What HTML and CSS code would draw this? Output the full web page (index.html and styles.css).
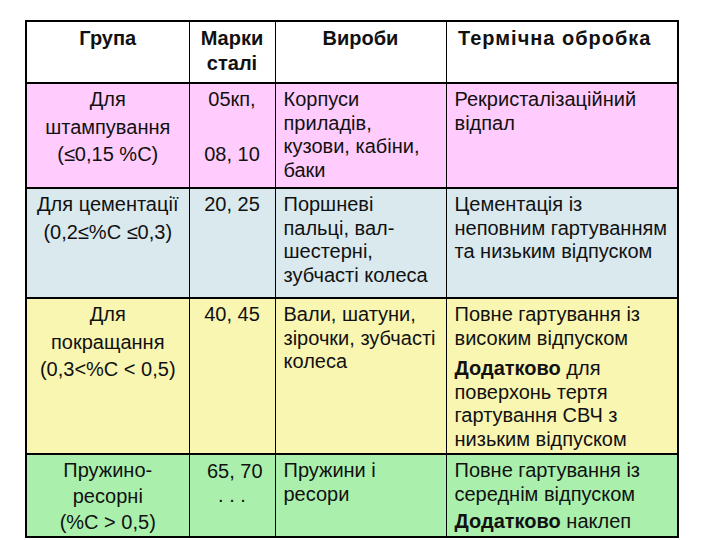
FILE: index.html
```html
<!DOCTYPE html>
<html lang="uk">
<head>
<meta charset="utf-8">
<title>Марки сталі</title>
<link rel="stylesheet" href="styles.css">
</head>
<body>
<div class="page">
  <table class="steel">
    <colgroup>
      <col class="c1"><col class="c2"><col class="c3"><col class="c4">
    </colgroup>
    <thead>
      <tr class="head">
        <th class="group">Група</th>
        <th class="grade">Марки<br>сталі</th>
        <th class="items">Вироби</th>
        <th class="treat">Термічна обробка</th>
      </tr>
    </thead>
    <tbody>
      <tr class="row pink">
        <td class="group">Для<br>штампування<br>(≤0,15 %С)</td>
        <td class="grade">05кп,<br>&nbsp;<br>08, 10</td>
        <td class="items">Корпуси<br>приладів,<br>кузови, кабіни,<br>баки</td>
        <td class="treat"><p>Рекристалізаційний<br>відпал</p></td>
      </tr>
      <tr class="row blue">
        <td class="group">Для цементації<br>(0,2≤%С ≤0,3)</td>
        <td class="grade">20, 25</td>
        <td class="items">Поршневі<br>пальці, вал-<br>шестерні,<br>зубчасті колеса</td>
        <td class="treat"><p>Цементація із<br>неповним гартуванням<br>та низьким відпуском</p></td>
      </tr>
      <tr class="row yellow">
        <td class="group">Для<br>покращання<br>(0,3&lt;%С &lt; 0,5)</td>
        <td class="grade">40, 45</td>
        <td class="items">Вали, шатуни,<br>зірочки, зубчасті<br>колеса</td>
        <td class="treat"><p>Повне гартування із<br>високим відпуском</p><p class="extra"><b>Додатково</b> для<br>поверхонь тертя<br>гартування СВЧ з<br>низьким відпуском</p></td>
      </tr>
      <tr class="row green">
        <td class="group">Пружино-<br>ресорні<br>(%С &gt; 0,5)</td>
        <td class="grade">&nbsp;65, 70<br>. . .</td>
        <td class="items">Пружини і<br>ресори</td>
        <td class="treat"><p>Повне гартування із<br>середнім відпуском</p><p class="extra2"><b>Додатково</b> наклеп</p></td>
      </tr>
    </tbody>
  </table>
</div>
</body>
</html>
```

FILE: styles.css
```css
html, body {
  margin: 0;
  padding: 0;
  background: #ffffff;
}

.page {
  padding: 20px 0 0 25px;
}

.steel {
  border-collapse: collapse;
  table-layout: fixed;
  width: 652px;
  border: 2px solid #000;
  font-family: "Liberation Sans", Arial, sans-serif;
  font-size: 20px;
  color: #111;
}

.c1 { width: 163px; }
.c2 { width: 86px; }
.c3 { width: 171px; }
.c4 { width: 232px; }

.steel th,
.steel td {
  vertical-align: top;
  border-left: 1px solid #000;
  border-right: 1px solid #000;
  border-top: 2px solid #000;
  border-bottom: 2px solid #000;
  padding: 4px 2px 0 8px;
  line-height: 23.5px;
}

.steel th {
  font-weight: bold;
  text-align: center;
  line-height: 25px;
  padding: 4px 2px 0 2px;
}

.steel th.treat {
  letter-spacing: 1px;
  padding-right: 16px;
}

.head { height: 62px; background: #ffffff; }
.pink { height: 105px; background: #ffccfd; }
.blue { height: 110px; background: #d9e9ee; }
.yellow { height: 156px; background: #f9f6b2; }
.green { height: 83px; background: #aaf0ac; }

.steel td.group {
  text-align: center;
  line-height: 27.5px;
  padding: 2px 2px 0 2px;
}

.steel td.grade {
  text-align: center;
  line-height: 27.5px;
  padding: 2px 2px 0 2px;
}

.green td.group {
  line-height: 26px;
}

.green td.grade {
  line-height: 24px;
  padding-top: 4px;
}

.steel td p {
  margin: 0;
}

.steel td p.extra {
  margin-top: 7px;
}

.steel td p.extra2 {
  margin-top: 4px;
}
```
